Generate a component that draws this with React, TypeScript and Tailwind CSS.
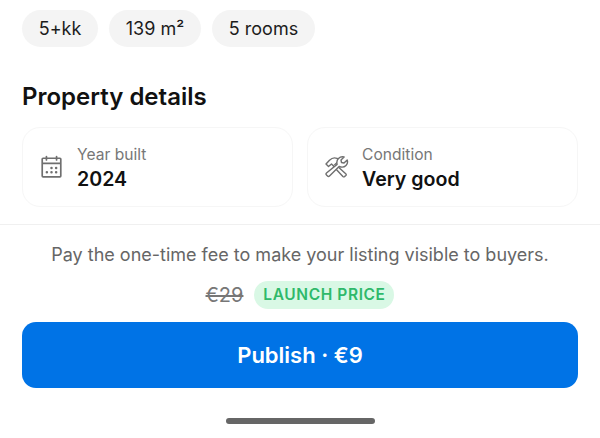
import { PiCalendarDots } from "react-icons/pi";
import type { ReactNode } from "react";

function Chip({ children, className }: { children: ReactNode; className: string }) {
  return (
    <div className={`flex h-[37px] items-center justify-center rounded-full bg-[#f4f4f4] text-[18px] text-[#1c1c1c] ${className}`}>
      {children}
    </div>
  );
}

function DetailCard({ icon, label, value }: { icon: ReactNode; label: string; value: string }) {
  return (
    <div className="flex h-[80px] flex-1 items-center gap-[12px] rounded-[18px] border border-[#f6f6f6] px-[15px]">
      <div className="flex w-[27px] shrink-0 items-center justify-center text-[#6f6f6f]">{icon}</div>
      <div className="flex flex-col pt-[2px]">
        <span className="text-[15.6px] leading-[22px] text-[#777777]">{label}</span>
        <span className="text-[19.6px] leading-[26px] font-semibold text-[#111111]">{value}</span>
      </div>
    </div>
  );
}

function ToolsIcon() {
  return (
    <svg width="25" height="22" viewBox="0 0 24 22" fill="none" stroke="currentColor" strokeWidth="1.4" strokeLinejoin="round">
      <path d="M1.5 8L5 4.2C7.5 1.8 10 1.4 12.5 2.4L15 4.5L11.5 7.5L9 10L7 8L4 10.5Z" />
      <path d="M11 8.5L21.5 18Q22 18.8 21.3 19.5L20 20.6Q19.2 21.2 18.4 20.5L8.8 10.2" fill="white" />
      <path
        d="M14.6 10.4L5 20Q4 21 3 20L2 19Q1 18 2 17L12.6 8.4C12 6 12.5 4 14 2.5C15.5 1 17.5 .5 19.6 1L16.5 4L17 6.5L19.5 7L22.7 4C23.3 5.8 23 8 21.5 9.5C20 11 17 11.5 14.6 10.4Z"
        fill="white"
      />
    </svg>
  );
}

export default function App() {
  return (
    <div className="flex h-[438px] w-[600px] flex-col overflow-hidden bg-white font-['Inter',sans-serif]">
      <div className="px-[22px] pt-[10px]">
        <div className="flex gap-[11px]">
          <Chip className="w-[76px]">5+kk</Chip>
          <Chip className="w-[92px]">139 m²</Chip>
          <Chip className="w-[103px]">5 rooms</Chip>
        </div>
        <h2 className="mt-[33px] text-[24px] leading-[34px] font-semibold text-[#111111]">Property details</h2>
        <div className="mt-[13px] flex gap-[14px]">
          <DetailCard icon={<PiCalendarDots size={27} />} label="Year built" value="2024" />
          <DetailCard icon={<ToolsIcon />} label="Condition" value="Very good" />
        </div>
      </div>
      <div className="mt-[17px] flex flex-1 flex-col border-t border-[#f0f0f0] px-[22px]">
        <p className="mt-[17px] text-center text-[18px] leading-[26px] text-[#666666]">
          Pay the one-time fee to make your listing visible to buyers.
        </p>
        <div className="mt-[13px] flex h-[28px] items-center justify-center gap-[11px]">
          <span className="text-[20px] leading-[28px] text-[#777777] line-through">€29</span>
          <span className="flex h-[28px] w-[140px] items-center justify-center rounded-full bg-[#d9f8e5] text-[15.5px] font-semibold tracking-[0.6px] text-[#2fb96a]">
            LAUNCH PRICE
          </span>
        </div>
        <button className="mt-[13px] flex h-[66px] w-full items-center justify-center rounded-[14px] bg-[#0073e6] text-[22px] font-semibold text-white">
          Publish · €9
        </button>
        <div className="mx-auto mt-[30px] h-[5.5px] w-[149px] rounded-full bg-[#666666]" />
      </div>
    </div>
  );
}
